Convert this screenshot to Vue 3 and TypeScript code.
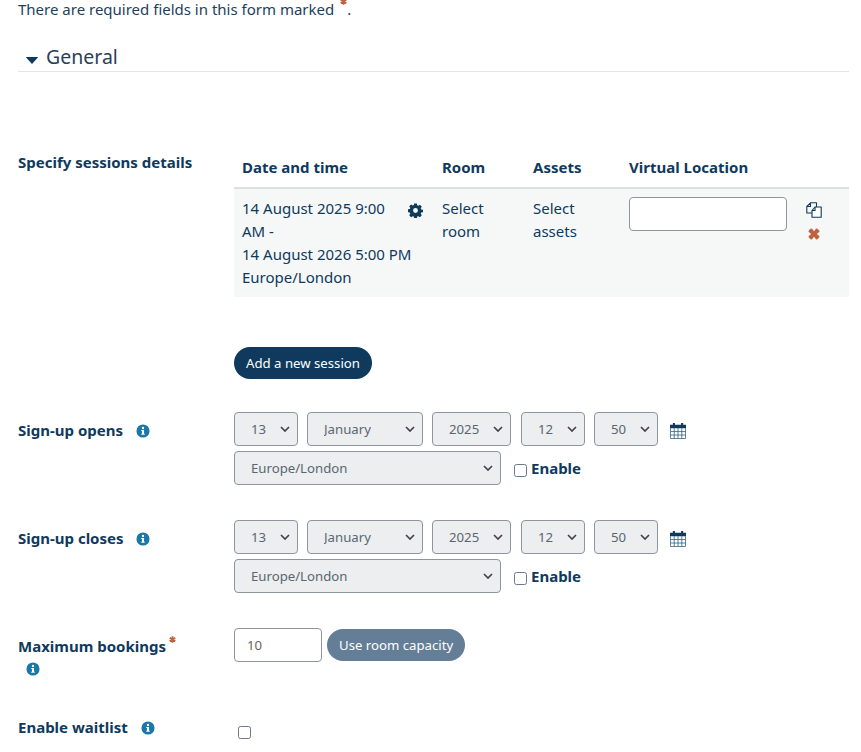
<script setup lang="ts">
const days = ['13']
const tz = ['Europe/London']
interface Signup { label: string }
const signups: Signup[] = [{ label: 'Sign-up opens' }, { label: 'Sign-up closes' }]
const infoPath = 'M8 .5a7.5 7.5 0 1 0 0 15 7.5 7.5 0 0 0 0-15zM8 3.2a1.35 1.35 0 1 1 0 2.7 1.35 1.35 0 0 1 0-2.7zM10 12.2H6v-1.2h.8V8.1H6V6.9h3.2V11h.8z'
const starPath = 'M4 .3v7.400M.8 2.150l6.400 3.700M7.200 2.150l-6.400 3.700'
</script>

<template>
  <div class="page">
    <p class="required">There are required fields in this form marked <svg class="star-big" viewBox="0 0 8 8" width="7" height="7"><path :d="starPath" fill="none" stroke="#c0623f" stroke-width="2" /></svg>.</p>

    <div class="section-head">
      <svg class="caret" viewBox="0 0 12 7" width="12" height="7"><path d="M.3 0h11.4a.3.3 0 0 1 .2.5L6.2 6.8a.3.3 0 0 1-.4 0L.1.5A.3.3 0 0 1 .3 0z" fill="#0f3a5d"/></svg>
      <h3 class="section-title">General</h3>
    </div>

    <div class="row sessions-row">
      <div class="label">Specify sessions details</div>
      <div class="content">
        <table class="sessions">
          <thead>
            <tr>
              <th class="c-date">Date and time</th>
              <th class="c-room">Room</th>
              <th class="c-assets">Assets</th>
              <th class="c-virtual">Virtual Location</th>
              <th class="c-actions"></th>
            </tr>
          </thead>
          <tbody>
            <tr>
              <td class="date-cell">
                <svg class="gear" viewBox="0 0 16 16" width="15" height="15">
                  <path fill="#0f3a5d" fill-rule="evenodd" d="M6.600.5h2.800l.4 2 1.100.5 1.800-1.100 2 2-1.100 1.800.5 1.100 2 .4v2.600l-2 .4-.5 1.100 1.100 1.800-2 2-1.800-1.100-1.100.5-.4 2H6.600l-.4-2-1.100-.5-1.800 1.100-2-2 1.100-1.800-.5-1.100-2-.4V6.800l2-.4.5-1.100L1.300 3.500l2-2 1.800 1.100 1.100-.5zM8 5.400a2.600 2.600 0 1 0 0 5.200 2.600 2.600 0 0 0 0-5.200z"/>
                </svg>
                14 August 2025 9:00 AM -<br />14 August 2026 5:00 PM<br />Europe/London
              </td>
              <td>Select room</td>
              <td>Select assets</td>
              <td><input class="text-input virtual" type="text" /></td>
              <td class="actions">
                <svg viewBox="0 0 16 16" width="16" height="16">
                  <path fill="none" stroke="#0f3a5d" stroke-width="1.100" stroke-linejoin="round" d="M6.500 11H.8V4.500L4.500.8h6V5M4.500.8v3.700H.8"/>
                  <path fill="#fff" stroke="#0f3a5d" stroke-width="1.100" stroke-linejoin="round" d="M9 5h6.200v10.200H6V8.500z"/>
                  <path fill="none" stroke="#0f3a5d" stroke-width="1.100" d="M9 5v3.500H6"/>
                </svg>
                <svg class="remove" viewBox="0 0 12 12" width="12" height="12">
                  <path fill="#c0623f" d="M8 .8a1 1 0 0 1 1.400 0l1.800 1.800a1 1 0 0 1 0 1.400L8.800 6l2.400 2a1 1 0 0 1 0 1.400l-1.800 1.800a1 1 0 0 1-1.400 0L6 8.800l-2 2.400a1 1 0 0 1-1.400 0L.8 9.400a1 1 0 0 1 0-1.400L3.200 6 .8 4a1 1 0 0 1 0-1.400L2.600.8A1 1 0 0 1 4 .8L6 3.200z"/>
                </svg>
              </td>
            </tr>
          </tbody>
        </table>
        <button class="btn primary" type="button">Add a new session</button>
      </div>
    </div>

    <div v-for="s in signups" :key="s.label" class="row date-row">
      <div class="label">
        {{ s.label }}
        <svg class="info" viewBox="0 0 16 16" width="14" height="14"><path fill="#1b77a8" fill-rule="evenodd" :d="infoPath" /></svg>
      </div>
      <div class="content">
        <div class="controls">
          <select class="sel w64"><option v-for="d in days" :key="d">{{ d }}</option></select>
          <select class="sel w116"><option>January</option></select>
          <select class="sel w79"><option>2025</option></select>
          <select class="sel w64"><option>12</option></select>
          <select class="sel w64"><option>50</option></select>
          <svg class="calendar" viewBox="1 1 14 14" width="16" height="16">
            <path fill="#0f3a5d" d="M1 2.500h2.500V1h1.800v1.500h5.400V1h1.800v1.500H15V5.500H1z"/>
            <path fill="none" stroke="#34607f" stroke-width=".7" d="M1.400 5.500v9.100h13.200V5.500M1.400 8.500h13.200M1.400 11.500h13.200M4.700 5.500v9.100M8 5.500v9.100M11.300 5.500v9.100"/>
          </svg>
        </div>
        <div class="controls tz-line">
          <select class="sel w267"><option v-for="t in tz" :key="t">{{ t }}</option></select>
          <label class="enable"><input type="checkbox" class="check" /><span>Enable</span></label>
        </div>
      </div>
    </div>

    <div class="row max-row">
      <div class="label">
        <span>Maximum bookings<svg class="star" viewBox="0 0 8 8" width="7" height="7"><path :d="starPath" fill="none" stroke="#c0623f" stroke-width="2" /></svg></span>
        <svg class="info block" viewBox="0 0 16 16" width="14" height="14"><path fill="#1b77a8" fill-rule="evenodd" :d="infoPath" /></svg>
      </div>
      <div class="content controls top">
        <input class="text-input max" type="text" value="10" />
        <button class="btn muted" type="button">Use room capacity</button>
      </div>
    </div>

    <div class="row waitlist-row">
      <div class="label">
        Enable waitlist
        <svg class="info" viewBox="0 0 16 16" width="14" height="14"><path fill="#1b77a8" fill-rule="evenodd" :d="infoPath" /></svg>
      </div>
      <div class="content"><input type="checkbox" class="check waitlist" /></div>
    </div>
  </div>
</template>

<style>
html, body { background: #fff; overflow: hidden; }
</style>

<style scoped>
.page {
  height: 752px;
  overflow: hidden;
  box-sizing: border-box;
  padding: 0 12px 0 18px;
  font-family: "Noto Sans", "Open Sans", sans-serif;
  font-size: 15px;
  line-height: 23px;
  color: #0f3a5d;
}
.required { margin: -2px 0 0; height: 23px; color: #1d3f5c; }
.star-big { margin-left: 2px; vertical-align: 10px; }
.section-head {
  display: flex;
  align-items: flex-end;
  margin-top: 19px;
  height: 31px;
  padding-left: 8px;
  border-bottom: 1px solid #e3e4e6;
}
.caret { margin-right: 8px; margin-bottom: 7px; }
.section-title { margin: 0; font-size: 19.500px; font-weight: 400; color: #2c4058; line-height: 28px; }
.row { display: grid; grid-template-columns: 216px 1fr; }
.label { font-weight: 700; color: #0f3a5d; }
.sessions-row { margin-top: 79px; }
.sessions { width: 615px; border-collapse: collapse; table-layout: fixed; }
.sessions th { font-weight: 700; text-align: left; padding: 5px 8px 8px; height: 23px; border-bottom: 2px solid #dedfe1; }
.sessions td { vertical-align: top; padding: 8px; background: #f6f8f8; height: 92px; }
.c-date { width: 184px; }
.c-room { width: 75px; }
.c-assets { width: 80px; }
.c-virtual { width: 158px; }
.gear { float: right; margin: 6px 3px 0 0; }
.text-input {
  box-sizing: border-box;
  border: 1px solid #8f959e;
  border-radius: 4px;
  background: #fff;
  height: 34px;
  font: inherit;
  color: #6a5f5c;
  outline: none;
}
.virtual { width: 158px; display: block; }
.actions svg { display: block; margin: 5px 0 0 3px; }
.actions svg.remove { margin: 10px 0 0 5px; }
.btn { border: 0; border-radius: 16px; font: inherit; color: #fff; padding: 0 12px; height: 32px; line-height: 32px; white-space: nowrap; font-size: 13.200px; }
.primary { display: block; background: #0f3a5d; margin-top: 50px; }
.muted { background: #647e97; margin: 1px 0 0 5px; }
.date-row { margin-top: 33px; }
.date-row .label { margin-top: 7px; }
.date-row + .date-row { margin-top: 35px; }
.info { margin-left: 9px; vertical-align: -2px; }
.info.block { display: block; margin: 4px 0 0 8px; }
.controls { display: flex; align-items: center; }
.controls.top { align-items: flex-start; }
.tz-line { margin-top: 5px; }
.sel {
  appearance: none;
  box-sizing: border-box;
  height: 34px;
  border: 1px solid #8f959e;
  border-radius: 4px;
  background-color: #eceeef;
  background-image: url("data:image/svg+xml,%3Csvg xmlns='http://www.w3.org/2000/svg' viewBox='0 0 10 6'%3E%3Cpath d='M1 1l4 4 4-4' fill='none' stroke='%23493f4d' stroke-width='1.700'/%3E%3C/svg%3E");
  background-repeat: no-repeat;
  background-position: right 7px center;
  background-size: 10px 6px;
  padding: 1px 20px 0 16px;
  font: inherit;
  font-size: 13.200px;
  color: #5a6672;
  margin-right: 9px;
}
.w64 { width: 64px; }
.w116 { width: 116px; }
.w79 { width: 79px; margin-right: 10px; }
.w267 { width: 267px; margin-right: 13px; }
.calendar { margin: 4px 0 0 3px; }
.enable { display: flex; align-items: center; font-weight: 700; color: #0f3a5d; }
.check {
  appearance: none;
  width: 13px;
  height: 13px;
  box-sizing: border-box;
  border: 1px solid #6b7a8c;
  border-radius: 2.500px;
  background: #fff;
  margin: 4px 4px 0 0;
}
.star { margin-left: 3px; vertical-align: 9px; }
.max-row { margin-top: 35px; }
.max-row .label { margin-top: 7px; }
.text-input.max { width: 88px; padding: 0 12px; font-size: 13.200px; }
.waitlist-row { margin-top: 40px; }
.waitlist { margin: 10px 0 0 4px; display: block; }
</style>
